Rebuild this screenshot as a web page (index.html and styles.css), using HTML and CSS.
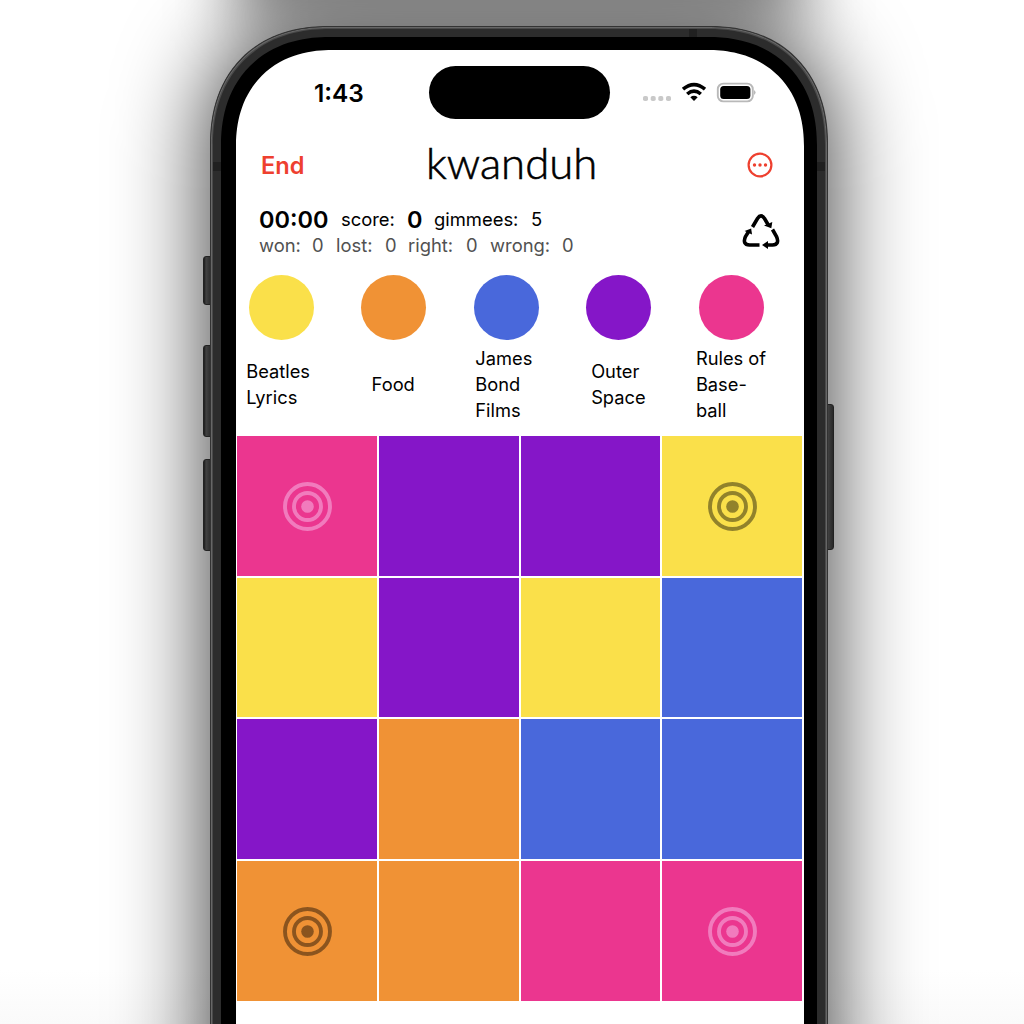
FILE: index.html
```html
<!DOCTYPE html>
<html lang="en">
<head>
<meta charset="utf-8">
<title>kwanduh</title>
<link rel="stylesheet" href="styles.css">
</head>
<body>
<div class="stage">
  <div class="shadow"></div><div class="shadow-top"></div>
  <i class="key key-action"></i><i class="key key-up"></i><i class="key key-down"></i><i class="key key-power"></i>
  <main class="phone">
    <i class="seam seam-top"></i><i class="seam seam-left"></i><i class="seam seam-right"></i>
    <div class="bezel">
    <div class="screen">
      <div class="status">
        <span class="clock">1:43</span>
        <span class="island"></span>
        <svg class="signals" width="114" height="24" viewBox="0 0 114 24">
          <g fill="#c9c9c9"><rect x="1" y="14" width="5" height="5" rx="1.8"/><rect x="8.7" y="14" width="5" height="5" rx="1.8"/><rect x="16.3" y="14" width="5" height="5" rx="1.8"/><rect x="24" y="14" width="5" height="5" rx="1.8"/></g>
          <g fill="none" stroke="#000" stroke-width="3.6"><path d="M41 7.2Q52 -2.1 63 7.2"/><path d="M45.2 12Q52 6.2 58.800 12"/></g>
          <path d="M48.300 15.200Q52 12.300 55.700 15.200L52 19Z"/>
          <rect x="75.800" y="1.600" width="35" height="17.800" rx="5.500" fill="none" stroke="#b9b9b9" stroke-width="1.900"/>
          <rect x="78.200" y="4" width="30.200" height="13" rx="3.500"/>
          <path d="M112.300 8Q114.500 10.500 112.300 13Z" fill="#999"/>
        </svg>
      </div>
      <header class="bar">
        <span class="end">End</span>
        <h1 class="title">kwanduh</h1>
        <svg class="more" width="26" height="26" viewBox="0 0 26 26"><circle cx="13" cy="13" r="11.400" fill="none" stroke="#ee402f" stroke-width="2.200"/><g fill="#ee402f"><circle cx="7.500" cy="13" r="1.700"/><circle cx="13" cy="13" r="1.700"/><circle cx="18.500" cy="13" r="1.700"/></g></svg>
      </header>
      <section class="stats">
        <div class="lines">
          <div class="line"><b class="time">00:00</b><span class="score">score:</span><b class="points">0</b><span class="gim">gimmees:</span><span class="five">5</span></div>
          <div class="line muted"><span class="w1">won:</span><span class="w2">0</span><span class="w3">lost:</span><span class="w4">0</span><span class="w5">right:</span><span class="w6">0</span><span class="w7">wrong:</span><span>0</span></div>
        </div>
        <svg class="recycle" width="38" height="36" viewBox="0 0 38 36">
          <g fill="none" stroke="#000" stroke-width="3.600">
            <path d="M10.500 14L15.500 5.500Q19 0.300 22.500 5.500L26 11.500"/>
            <path d="M30.500 16.500L34.500 23.500Q38 31.500 30.500 32H24"/>
            <path d="M17.500 32H7.500Q0 31.500 3.500 23.500L6.700 18.500"/>
          </g>
          <path d="M22 12.500L29.300 15.300L30.300 9Z"/><path d="M26 28L20 32L26 36Z"/><path d="M2.600 18L9.200 15.500L10 21.500Z"/>
        </svg>
      </section>
      <section class="topics">
        <div class="topic"><i class="dot yellow"></i><p class="label first">Beatles<br>Lyrics</p></div>
        <div class="topic"><i class="dot orange"></i><p class="label">Food</p></div>
        <div class="topic"><i class="dot blue"></i><p class="label third">James<br>Bond<br>Films</p></div>
        <div class="topic"><i class="dot purple"></i><p class="label">Outer<br>Space</p></div>
        <div class="topic"><i class="dot pink"></i><p class="label">Rules of<br>Base-<br>ball</p></div>
      </section>
      <section class="board">
        <div class="cell pink light"><svg class="target" viewBox="0 0 50 50"><use href="#rings"/></svg></div><div class="cell purple"></div><div class="cell purple"></div><div class="cell yellow"><svg class="target" viewBox="0 0 50 50"><use href="#rings"/></svg></div>
        <div class="cell yellow"></div><div class="cell purple"></div><div class="cell yellow"></div><div class="cell blue"></div>
        <div class="cell purple"></div><div class="cell orange"></div><div class="cell blue"></div><div class="cell blue"></div>
        <div class="cell orange"><svg class="target" viewBox="0 0 50 50"><use href="#rings"/></svg></div><div class="cell orange"></div><div class="cell pink"></div><div class="cell pink light"><svg class="target" viewBox="0 0 50 50"><use href="#rings"/></svg></div>
      </section>
    </div>
    </div>
  </main>
</div>
<svg class="defs" width="0" height="0"><defs><g id="rings"><circle cx="25.500" cy="25.500" r="6.300" fill="currentColor"/><g fill="none" stroke="currentColor" stroke-width="3.900"><circle cx="25.500" cy="25.500" r="13.500"/><circle cx="25.500" cy="25.500" r="22.500"/></g></g></defs></svg>
</body>
</html>
```
FILE: styles.css
```css
* { box-sizing: border-box; }
body { margin: 0; background: #fff; font-family: Inter, "Liberation Sans", sans-serif; color: #000; }
.stage { position: relative; width: 1024px; height: 1024px; overflow: hidden; padding: 26px 196px 0 210px; background: linear-gradient(#fff 970px, #fafafa); }
.defs { position: absolute; }
.shadow { position: absolute; left: 210px; top: 30px; width: 618px; height: 1300px; border-radius: 100px; background: rgba(0,0,0,.8); filter: blur(47px); }
.shadow-top { position: absolute; left: 235px; top: -200px; width: 568px; height: 220px; background: rgba(0,0,0,.48); filter: blur(32px); }
.phone { position: relative; height: 1300px; padding: 10px; border-radius: 118px; corner-shape: superellipse(1.15); background: #2c2c2c; border: 1px solid #333; box-shadow: inset 0 0 0 1px #666, inset 0 0 0 2px #4a4a4a; }
.bezel { height: 1270px; padding: 13px 13px 13px 15px; background: #000; border-radius: 108px; corner-shape: superellipse(1.15); }
.screen { height: 1240px; background: #fff; border-radius: 96px; corner-shape: superellipse(1.15); overflow: hidden; }
.key { position: absolute; left: 203px; width: 9px; background: linear-gradient(90deg, #1b1b1b, #414141 30%, #292929); border: 1px solid #222; border-radius: 3px 0 0 3px; }
.key-action { top: 256px; height: 49px; }
.key-up { top: 345px; height: 92px; }
.key-down { top: 459px; height: 92px; }
.key-power { left: 825px; top: 404px; height: 146px; border-radius: 0 3px 3px 0; }
.seam { position: absolute; background: #202020; }
.seam-top { left: 478px; top: 2px; width: 8px; height: 8px; }
.seam-left { left: 2px; top: 135px; width: 8px; height: 9px; }
.seam-right { right: 2px; top: 135px; width: 8px; height: 9px; }
.status { height: 85px; display: flex; align-items: center; padding: 0 47px 0 78px; }
.clock { width: 115px; font-size: 24.400px; font-weight: 600; }
.island { width: 181px; height: 53px; border-radius: 27px; background: #000; }
.signals { margin: 2px 0 0 32px; }
.bar { height: 62px; display: grid; grid-template-columns: 165px 1fr 32px; align-items: center; padding: 0 25px; }
.end { font-size: 23.600px; font-weight: 600; color: #ee402f; padding-bottom: 2px; }
.more { margin-bottom: 2px; }
.title { margin: 0; padding-bottom: 9px; font: 300 43.700px/52px Lato, sans-serif; -webkit-text-stroke: .6px #000; }
.stats { height: 66px; display: flex; justify-content: space-between; padding: 9px 24px 0 23px; }
.line { height: 26px; display: flex; align-items: center; font-size: 18.400px; white-space: nowrap; }
.time, .points { font-size: 23.500px; font-weight: 600; }
.time { width: 82px; }
.score { width: 66px; }
.points { width: 27px; }
.gim { width: 97px; }
.muted { color: #515151; }
.w1 { width: 53px; } .w2 { width: 24px; } .w3 { width: 49px; } .w4 { width: 23px; } .w5 { width: 58px; } .w6 { width: 24px; } .w7 { width: 72px; }
.recycle { margin-top: 7px; }
.topics { height: 173px; display: grid; grid-template-columns: repeat(5, 112.600px); margin-left: -11.200px; }
.topic { display: flex; flex-direction: column; align-items: center; padding-top: 12.400px; }
.dot { display: block; flex: none; width: 65px; height: 65px; border-radius: 50%; }
.label { margin: 0 1px 0 0; height: 87px; display: flex; flex-direction: column; justify-content: center; font-size: 18.300px; line-height: 26px; }
.first { margin-right: 6px; }
.third { margin-right: 5px; }
.board { display: grid; grid-template-columns: 140px 140px 139px 140px; grid-template-rows: 140px 139px 140px 140px; gap: 2px; width: 565px; margin-left: 1px; }
.cell { display: grid; place-items: center; color: rgba(0,0,0,.42); }
.light { color: rgba(245,170,220,.6); }
.target { width: 50px; height: 50px; }
.yellow { background: #fae04a; }
.orange { background: #f09235; }
.blue { background: #4968db; }
.purple { background: #8516c8; }
.pink { background: #eb368f; }
```
